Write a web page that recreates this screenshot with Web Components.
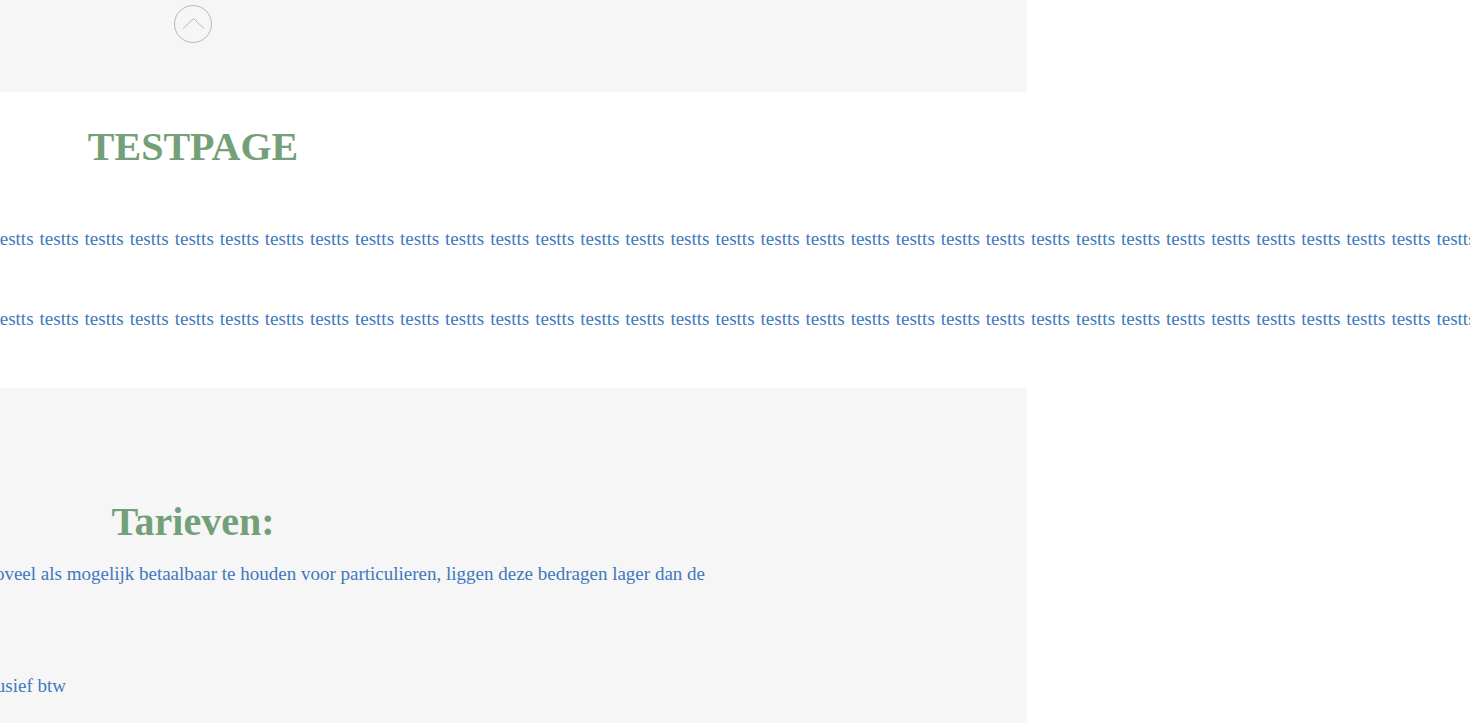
<!DOCTYPE html>
<html lang="nl">
<head>
  <meta charset="UTF-8">
  <meta name="viewport" content="width=device-width, initial-scale=1">
  <title>Testpage</title>
  <style>
    body {
      margin: 0;
      overflow: hidden;
      background: #fff;
      color: #4178be;
      font: 19px/24px "Liberation Serif", serif;
      --title: #74a079;
      --shade: #f6f6f6;
      --column: 386px;
    }
  </style>
  <script type="module">
    function define(name, html, setup) {
      const template = document.createElement('template');
      template.innerHTML = html;

      customElements.define(name, class extends HTMLElement {
        constructor() {
          super();
          this.attachShadow({mode: 'open'});
          this.shadowRoot.appendChild(template.content.cloneNode(true));
        }

        connectedCallback() {
          if (setup) setup(this);
        }
      });
    }

    define('page-band', `
      <style>
        :host {
          display: block;
          box-sizing: border-box;
          margin-right: 443px;
          background: var(--shade);
        }
        :host([kind="top"]) {
          padding: 5px 0 49px;
        }
        :host([kind="rates"]) {
          min-height: 335px;
          padding: 110px 0 24px;
        }
      </style>
      <slot></slot>
    `);

    define('page-title', `
      <style>
        :host {
          display: block;
          width: var(--column);
        }
        h2 {
          margin: 0;
          color: var(--title);
          font-size: 40px;
          line-height: 48px;
          text-align: center;
        }
      </style>
      <h2><slot></slot></h2>
    `);

    define('scroll-top', `
      <style>
        :host {
          display: flex;
          justify-content: center;
          width: var(--column);
        }
        button {
          display: block;
          padding: 0;
          border: 0;
          background: none;
          cursor: pointer;
        }
        svg {
          display: block;
        }
      </style>
      <button type="button" aria-label="Naar boven">
        <svg width="38" height="38" viewBox="0 0 38 38" fill="none" stroke="#b8b8b8">
          <circle cx="19" cy="19" r="18.5"/>
          <path d="M9 23.500 19.500 13.500 30 23.500"/>
        </svg>
      </button>
    `, host => {
      host.shadowRoot.querySelector('button').onclick = () => window.scrollTo(0, 0);
    });

    // One long line that runs off both sides of the window.
    define('test-line', `
      <style>
        :host {
          display: flex;
          justify-content: center;
          overflow: hidden;
        }
        p {
          display: flex;
          flex: none;
          gap: 6px;
          margin: 0;
        }
      </style>
      <p></p>
    `, host => {
      const count = Number(host.getAttribute('count'));
      host.shadowRoot.querySelector('p').innerHTML = Array(count).fill('<span>testts</span>').join(' ');
    });

    // The end of the line stays in view, its start is clipped.
    define('line-end', `
      <style>
        :host {
          display: flex;
          justify-content: flex-end;
          overflow: hidden;
          width: 705px;
        }
        :host([short]) {
          width: 66px;
        }
        p {
          flex: none;
          margin: 0;
          white-space: nowrap;
        }
      </style>
      <p><slot></slot></p>
    `);

    define('test-section', `
      <style>
        :host {
          display: flex;
          flex-direction: column;
          padding: 31px 0 57px;
        }
        .lines {
          display: grid;
          grid-template-columns: 100%;
          gap: 56px;
          padding-top: 56px;
        }
      </style>
      <slot name="title"></slot>
      <div class="lines"><slot></slot></div>
    `);

    define('rate-text', `
      <style>
        :host {
          display: grid;
          gap: 88px;
          padding-top: 16px;
        }
      </style>
      <slot></slot>
    `);
  </script>
</head>
<body>
  <page-band kind="top">
    <scroll-top></scroll-top>
  </page-band>
  <test-section>
    <page-title slot="title">TESTPAGE</page-title>
    <test-line count="33"></test-line>
    <test-line count="33"></test-line>
  </test-section>
  <page-band kind="rates">
    <page-title>Tarieven:</page-title>
    <rate-text>
      <line-end>zoveel als mogelijk betaalbaar te houden voor particulieren, liggen deze bedragen lager dan de</line-end>
      <line-end short>usief btw</line-end>
    </rate-text>
  </page-band>
</body>
</html>
